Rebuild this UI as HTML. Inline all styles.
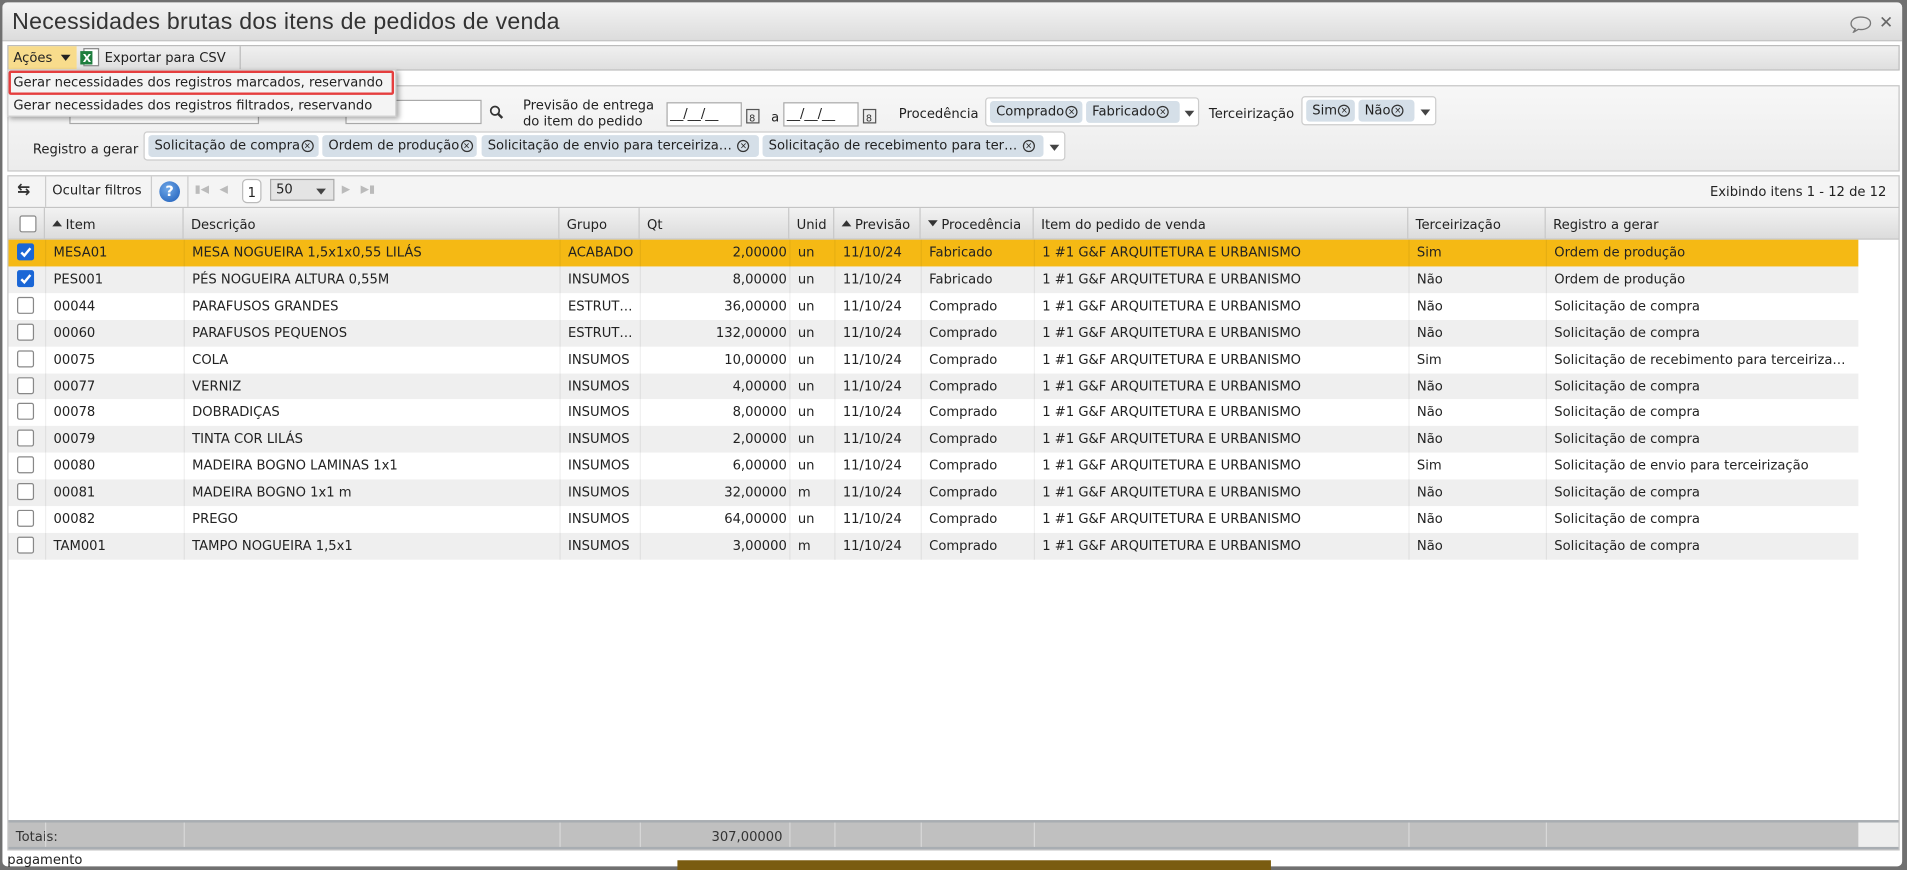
<!DOCTYPE html>
<html><head><meta charset="utf-8"><style>
*{box-sizing:border-box;margin:0;padding:0}
html,body{width:1907px;height:870px;overflow:hidden;background:#707070}
#s{position:absolute;left:0;top:0;width:1568px;height:715px;transform:scale(1.21620,1.21678);transform-origin:0 0;font-family:"DejaVu Sans","Liberation Sans",sans-serif;font-size:10.8px;color:#222}
.a{position:absolute;white-space:nowrap}
.chip{position:absolute;height:18px;top:2px;background:#d5dfe8;border-radius:3px;padding:2px 4px 0 5px;font-size:10.8px;color:#222;white-space:nowrap}
.x{display:inline-block;width:10px;height:10px;border:1px solid #333;border-radius:50%;font-size:7px;line-height:8px;text-align:center;vertical-align:1px;margin-left:1px}
.ms{position:absolute;height:24px;background:#fff;border:1px solid #ccc;border-radius:3px}
.dd{position:absolute;width:0;height:0;border-left:4px solid transparent;border-right:4px solid transparent;border-top:5px solid #444}
.inp{position:absolute;height:20px;background:#fff;border:1px solid #aaa}
.cb{position:absolute;left:7px;width:14px;height:14px;border:1px solid #888;border-radius:2px;background:#fff}
.cb.on{background:#1a66d6;border-color:#1a66d6}
.row{position:absolute;left:7px;width:1521px;height:22px}
.row div{position:absolute;top:4px;white-space:nowrap}
.hd{position:absolute;top:0;height:26px;border-right:1px solid #c8c8c8;padding:7px 0 0 6px;white-space:nowrap}
.tri{display:inline-block;width:0;height:0;border-left:4px solid transparent;border-right:4px solid transparent;margin-right:3px;vertical-align:2px}
</style></head><body><div id="s">
<div class="a" style="left:2px;top:2px;width:1562px;height:710px;background:#fff;border-radius:4px"></div>
<div class="a" style="left:2px;top:2px;width:1562px;height:32px;background:linear-gradient(#f4f4f4,#dcdcdc);border-radius:4px 4px 0 0;border-bottom:1px solid #b8b8b8"></div>
<div class="a" style="left:10px;top:8px;font-size:19px;color:#333;font-family:'Liberation Sans',sans-serif;letter-spacing:0.2px">Necessidades brutas dos itens de pedidos de venda</div>
<svg class="a" style="left:1520px;top:13px" width="20" height="14" viewBox="0 0 20 14"><path d="M10 1C5 1 2 3.5 2 6.5c0 2 1.5 3.5 3.5 4.3L4 13.5l4-2.4c.7.1 1.3.2 2 .2 5 0 8-2.5 8-5.3S15 1 10 1z" fill="none" stroke="#777" stroke-width="1.1"/></svg>
<div class="a" style="left:1545px;top:11px;font-size:14px;font-weight:bold;color:#666">✕</div>
<div class="a" style="left:6px;top:37px;width:1556px;height:21px;background:linear-gradient(#f0f0f0,#dfdfdf);border:1px solid #bbb"></div>
<div class="a" style="left:7px;top:38px;width:56px;height:19px;background:#f8dc8c"></div>
<div class="a" style="left:11px;top:41px">Ações</div>
<div class="dd" style="left:50px;top:45px;border-top-color:#222"></div>
<svg class="a" style="left:65px;top:39px" width="18" height="17" viewBox="0 0 18 17"><rect x="4" y="1" width="12" height="14" fill="#fff" stroke="#888"/><rect x="1" y="3" width="10" height="11" fill="#1e7e3e"/><text x="3" y="12" font-size="9" fill="#fff" font-family="DejaVu Sans" font-weight="bold">X</text></svg>
<div class="a" style="left:86px;top:41px">Exportar para CSV</div>
<div class="a" style="left:197px;top:38px;width:1px;height:19px;background:#bbb"></div>
<div class="a" style="left:6px;top:70px;width:1556px;height:71px;background:linear-gradient(#f7f7f7,#ececec);border:1px solid #c4c4c4"></div>
<div class="inp" style="left:57px;top:82px;width:156px"></div>
<div class="inp" style="left:284px;top:82px;width:112px"></div>
<svg class="a" style="left:402px;top:86px" width="12" height="12"><circle cx="5" cy="5" r="3.5" fill="none" stroke="#333" stroke-width="1.4"/><path d="M7.5 7.5L11 11" stroke="#333" stroke-width="2"/></svg>
<div class="a" style="left:430px;top:80px;line-height:13px">Previsão de entrega<br>do item do pedido</div>
<div class="inp" style="left:548px;top:84px;width:62px;padding:2px 0 0 2px">__/__/__</div>
<svg class="a" style="left:613px;top:88px" width="12" height="14"><rect x="1" y="2" width="10" height="11" fill="#eee" stroke="#555"/><text x="3" y="12" font-size="8" fill="#333">8</text></svg>
<div class="a" style="left:634px;top:90px">a</div>
<div class="inp" style="left:644px;top:84px;width:62px;padding:2px 0 0 2px">__/__/__</div>
<svg class="a" style="left:709px;top:88px" width="12" height="14"><rect x="1" y="2" width="10" height="11" fill="#eee" stroke="#555"/><text x="3" y="12" font-size="8" fill="#333">8</text></svg>
<div class="a" style="left:739px;top:87px">Procedência</div>
<div class="ms" style="left:810px;top:80px;width:176px"><div class="chip" style="left:3px;width:76px">Comprado<span class="x">×</span></div><div class="chip" style="left:82px;width:77px">Fabricado<span class="x">×</span></div><div class="dd" style="left:163px;top:10px"></div></div>
<div class="a" style="left:994px;top:87px">Terceirização</div>
<div class="ms" style="left:1070px;top:79px;width:111px"><div class="chip" style="left:3px;width:40px">Sim<span class="x">×</span></div><div class="chip" style="left:46px;width:46px">Não<span class="x">×</span></div><div class="dd" style="left:97px;top:10px"></div></div>
<div class="a" style="left:27px;top:116px">Registro a gerar</div>
<div class="ms" style="left:118px;top:108px;width:758px"><div class="chip" style="left:3px;width:140px">Solicitação de compra<span class="x">×</span></div><div class="chip" style="left:146px;width:127px">Ordem de produção<span class="x">×</span></div><div class="chip" style="left:277px;width:228px">Solicitação de envio para terceiriza… <span class="x">×</span></div><div class="chip" style="left:508px;width:231px">Solicitação de recebimento para ter… <span class="x">×</span></div><div class="dd" style="left:744px;top:10px"></div></div>
<div class="a" style="left:6px;top:57px;width:320px;height:39px;background:#f4f4f4;border:1px solid #ccc;box-shadow:2px 2px 4px rgba(0,0,0,.35)"></div>
<div class="a" style="left:7px;top:58px;width:317px;height:20px;border:2px solid #e53e3e;border-radius:2px"></div>
<div class="a" style="left:11px;top:61px">Gerar necessidades dos registros marcados, reservando</div>
<div class="a" style="left:11px;top:80px">Gerar necessidades dos registros filtrados, reservando</div>
<div class="a" style="left:6px;top:144px;width:1556px;height:555px;border:1px solid #c4c4c4;background:#fff"></div>
<div class="a" style="left:7px;top:145px;width:1554px;height:26px;background:#f4f4f4;border-bottom:1px solid #c4c4c4"></div>
<div class="a" style="left:14px;top:149px;font-size:13px;font-weight:bold;color:#333">⇆</div>
<div class="a" style="left:37px;top:145px;width:1px;height:25px;background:#ccc"></div>
<div class="a" style="left:43px;top:150px">Ocultar filtros</div>
<div class="a" style="left:124px;top:145px;width:1px;height:25px;background:#ccc"></div>
<div class="a" style="left:131px;top:149px;width:17px;height:17px;border-radius:50%;background:radial-gradient(circle at 40% 35%,#6fa8e8,#1c5bb8);color:#fff;font-weight:bold;text-align:center;line-height:17px;font-size:12px">?</div>
<div class="a" style="left:154px;top:145px;width:1px;height:25px;background:#ccc"></div>
<div class="a" style="left:160px;top:151px;color:#bbb;font-size:9px">▮◀ &nbsp; ◀</div>
<div class="a" style="left:199px;top:147px;width:16px;height:20px;border:1px solid #bbb;border-radius:4px;background:#fff;text-align:center;padding-top:4px">1</div>
<div class="a" style="left:222px;top:147px;width:53px;height:18px;border:1px solid #aaa;background:#e4e4e4;padding:1px 0 0 4px">50</div>
<div class="dd" style="left:260px;top:155px"></div>
<div class="a" style="left:281px;top:151px;color:#bbb;font-size:9px">▶ &nbsp; ▶▮</div>
<div class="a" style="left:1406px;top:151px">Exibindo itens 1 - 12 de 12</div>
<div class="a" style="left:7px;top:171px;width:1554px;height:26px;background:linear-gradient(#f2f2f2,#dcdcdc);border-bottom:1px solid #c4c4c4"></div>
<div class="a" style="left:7px;top:171px;height:26px;width:1554px">
<div class="hd" style="left:0;width:30px"><div style="position:absolute;left:9px;top:6px;width:14px;height:14px;border:1px solid #888;background:#fff;border-radius:2px"></div></div>
<div class="hd" style="left:30px;width:114px"><span class="tri" style="border-bottom:5px solid #333"></span>Item</div>
<div class="hd" style="left:144px;width:309px">Descrição</div>
<div class="hd" style="left:453px;width:66px">Grupo</div>
<div class="hd" style="left:519px;width:123px">Qt</div>
<div class="hd" style="left:642px;width:37px">Unid</div>
<div class="hd" style="left:679px;width:71px"><span class="tri" style="border-bottom:5px solid #333"></span>Previsão</div>
<div class="hd" style="left:750px;width:93px"><span class="tri" style="border-top:5px solid #333"></span>Procedência</div>
<div class="hd" style="left:843px;width:308px">Item do pedido de venda</div>
<div class="hd" style="left:1151px;width:113px">Terceirização</div>
<div class="hd" style="left:1264px;width:290px;border:none">Registro a gerar</div>
</div>
<div id="rows"></div>
<div class="a" style="left:7px;top:674px;width:1554px;height:24px;background:#c0c0c0;border-top:2px solid #a8adb2;border-bottom:2px solid #a8adb2"></div>
<div class="a" style="left:1528px;top:676px;width:33px;height:20px;background:#eee"></div>
<div class="a" style="left:13px;top:681px;color:#333">Totais:</div>
<div class="a" style="left:585px;top:681px;color:#333">307,00000</div>
<div class="a" style="left:557px;top:707px;width:488px;height:8px;background:#7a5c10"></div>
<div class="a" style="left:6px;top:700px;color:#222">pagamento</div>
</div>
<script>
var d=[["MESA01","MESA NOGUEIRA 1,5x1x0,55 LILÁS","ACABADO","2,00000","un","Fabricado","Sim","Ordem de produção"],
["PES001","PÉS NOGUEIRA ALTURA 0,55M","INSUMOS","8,00000","un","Fabricado","Não","Ordem de produção"],
["00044","PARAFUSOS GRANDES","ESTRUT…","36,00000","un","Comprado","Não","Solicitação de compra"],
["00060","PARAFUSOS PEQUENOS","ESTRUT…","132,00000","un","Comprado","Não","Solicitação de compra"],
["00075","COLA","INSUMOS","10,00000","un","Comprado","Sim","Solicitação de recebimento para terceiriza…"],
["00077","VERNIZ","INSUMOS","4,00000","un","Comprado","Não","Solicitação de compra"],
["00078","DOBRADIÇAS","INSUMOS","8,00000","un","Comprado","Não","Solicitação de compra"],
["00079","TINTA COR LILÁS","INSUMOS","2,00000","un","Comprado","Não","Solicitação de compra"],
["00080","MADEIRA BOGNO LAMINAS 1x1","INSUMOS","6,00000","un","Comprado","Sim","Solicitação de envio para terceirização"],
["00081","MADEIRA BOGNO 1x1 m","INSUMOS","32,00000","m","Comprado","Não","Solicitação de compra"],
["00082","PREGO","INSUMOS","64,00000","un","Comprado","Não","Solicitação de compra"],
["TAM001","TAMPO NOGUEIRA 1,5x1","INSUMOS","3,00000","m","Comprado","Não","Solicitação de compra"]];
var h="";
for(var i=0;i<d.length;i++){var r=d[i],t=197+i*21.9,bg=i==0?"#f5b914":(i%2?"#efefef":"#fff");
var cb=i<2?'<div class="cb on" style="top:3px;left:7px"><svg width="12" height="12" style="position:absolute;left:0;top:0"><path d="M2.5 6.5l2.5 2.5 5-6" stroke="#fff" stroke-width="2" fill="none"/></svg></div>':'<div class="cb" style="top:3px;left:7px"></div>';
h+='<div class="row" style="top:'+t+'px;background:'+bg+'">'+cb+
'<div style="left:37px">'+r[0]+'</div><div style="left:151px">'+r[1]+'</div><div style="left:460px">'+r[2]+'</div>'+
'<div style="right:'+(1521-640)+'px">'+r[3]+'</div><div style="left:649px">'+r[4]+'</div><div style="left:686px">11/10/24</div>'+
'<div style="left:757px">'+r[5]+'</div><div style="left:850px">1 #1 G&amp;F ARQUITETURA E URBANISMO</div><div style="left:1158px">'+r[6]+'</div><div style="left:1271px">'+r[7]+'</div></div>';}
document.getElementById("rows").innerHTML=h;
var s=document.getElementById("s"),xs=[37,151,460,526,649,686,757,850,1158,1271];
xs.forEach(function(x){var e=document.createElement("div");e.className="a";e.style.cssText="left:"+x+"px;top:197px;width:1px;height:263px;background:rgba(0,0,0,0.06)";s.appendChild(e);
var f=document.createElement("div");f.className="a";f.style.cssText="left:"+x+"px;top:676px;width:1px;height:20px;background:#d8d8d8";s.appendChild(f);});
</script>
</body></html>
